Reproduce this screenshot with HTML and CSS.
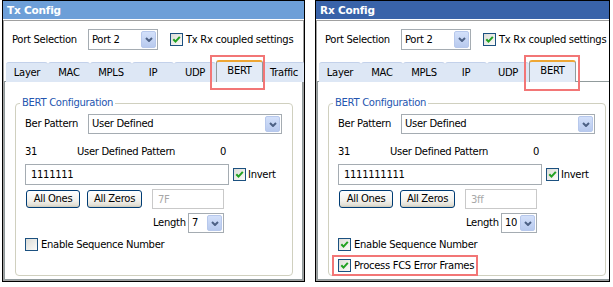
FILE: index.html
```html
<!DOCTYPE html>
<html lang="en">
<head>
  <meta charset="UTF-8" />
  <title>Tx / Rx Config</title>
  <link rel="stylesheet" href="styles.css">
</head>
<body>
  <div class="wrap">

    <!-- Tx panel -->
    <div class="panel panel-tx">
      <div class="title title-tx">Tx Config</div>
      <div class="frame">
        <div class="port-row">
          <span class="port-label">Port Selection</span>
          <div class="combo combo-port">
            <span class="combo-text">Port 2</span>
            <span class="drop"><svg width="8" height="5" viewBox="0 0 8 5"><path d="M1 1 L4 4 L7 1" fill="none" stroke="#4d6185" stroke-width="2"/></svg></span>
          </div>
          <label class="check-label coupled">
            <span class="check on"><svg width="11" height="11" viewBox="0 0 11 11"><path d="M2.3 5.2 L4.5 7.6 L8.8 2.8" fill="none" stroke="#21a121" stroke-width="2"/></svg></span>
            Tx Rx coupled settings
          </label>
        </div>

        <div class="tabs">
          <div class="tab">Layer</div>
          <div class="tab">MAC</div>
          <div class="tab">MPLS</div>
          <div class="tab">IP</div>
          <div class="tab">UDP</div>
          <div class="tab active mark-tx">BERT</div>
          <div class="tab">Traffic</div>
        </div>

        <div class="page">
          <fieldset class="group">
            <legend>BERT Configuration</legend>
            <div class="ber-row">
              <span class="ber-label">Ber Pattern</span>
              <div class="combo combo-ber">
                <span class="combo-text">User Defined</span>
                <span class="drop"><svg width="8" height="5" viewBox="0 0 8 5"><path d="M1 1 L4 4 L7 1" fill="none" stroke="#4d6185" stroke-width="2"/></svg></span>
              </div>
            </div>
            <div class="pattern-info">
              <span>31</span>
              <span>User Defined Pattern</span>
              <span>0</span>
            </div>
            <div class="pattern-row">
              <input class="text-input pattern-input" type="text" value="1111111">
              <label class="check-label invert">
                <span class="check on"><svg width="11" height="11" viewBox="0 0 11 11"><path d="M2.3 5.2 L4.5 7.6 L8.8 2.8" fill="none" stroke="#21a121" stroke-width="2"/></svg></span>
                Invert
              </label>
            </div>
            <div class="btn-row">
              <button class="btn btn-ones">All Ones</button>
              <button class="btn btn-zeros">All Zeros</button>
              <input class="text-input hex-input" type="text" value="7F" disabled>
            </div>
            <div class="length-row">
              <span class="length-label">Length</span>
              <div class="combo combo-len">
                <span class="combo-text">7</span>
                <span class="drop"><svg width="8" height="5" viewBox="0 0 8 5"><path d="M1 1 L4 4 L7 1" fill="none" stroke="#4d6185" stroke-width="2"/></svg></span>
              </div>
            </div>
            <label class="check-label seq-row">
              <span class="check"></span>
              Enable Sequence Number
            </label>
          </fieldset>
        </div>
      </div>
    </div>

    <!-- Rx panel -->
    <div class="panel panel-rx">
      <div class="title title-rx">Rx Config</div>
      <div class="frame">
        <div class="port-row">
          <span class="port-label">Port Selection</span>
          <div class="combo combo-port">
            <span class="combo-text">Port 2</span>
            <span class="drop"><svg width="8" height="5" viewBox="0 0 8 5"><path d="M1 1 L4 4 L7 1" fill="none" stroke="#4d6185" stroke-width="2"/></svg></span>
          </div>
          <label class="check-label coupled">
            <span class="check on"><svg width="11" height="11" viewBox="0 0 11 11"><path d="M2.3 5.2 L4.5 7.6 L8.8 2.8" fill="none" stroke="#21a121" stroke-width="2"/></svg></span>
            Tx Rx coupled settings
          </label>
        </div>

        <div class="tabs">
          <div class="tab">Layer</div>
          <div class="tab">MAC</div>
          <div class="tab">MPLS</div>
          <div class="tab">IP</div>
          <div class="tab">UDP</div>
          <div class="tab active mark-rx">BERT</div>
        </div>

        <div class="page">
          <fieldset class="group">
            <legend>BERT Configuration</legend>
            <div class="ber-row">
              <span class="ber-label">Ber Pattern</span>
              <div class="combo combo-ber">
                <span class="combo-text">User Defined</span>
                <span class="drop"><svg width="8" height="5" viewBox="0 0 8 5"><path d="M1 1 L4 4 L7 1" fill="none" stroke="#4d6185" stroke-width="2"/></svg></span>
              </div>
            </div>
            <div class="pattern-info">
              <span>31</span>
              <span>User Defined Pattern</span>
              <span>0</span>
            </div>
            <div class="pattern-row">
              <input class="text-input pattern-input" type="text" value="1111111111">
              <label class="check-label invert">
                <span class="check on"><svg width="11" height="11" viewBox="0 0 11 11"><path d="M2.3 5.2 L4.5 7.6 L8.8 2.8" fill="none" stroke="#21a121" stroke-width="2"/></svg></span>
                Invert
              </label>
            </div>
            <div class="btn-row">
              <button class="btn btn-ones">All Ones</button>
              <button class="btn btn-zeros">All Zeros</button>
              <input class="text-input hex-input" type="text" value="3ff" disabled>
            </div>
            <div class="length-row">
              <span class="length-label">Length</span>
              <div class="combo combo-len">
                <span class="combo-text">10</span>
                <span class="drop"><svg width="8" height="5" viewBox="0 0 8 5"><path d="M1 1 L4 4 L7 1" fill="none" stroke="#4d6185" stroke-width="2"/></svg></span>
              </div>
            </div>
            <label class="check-label seq-row">
              <span class="check on"><svg width="11" height="11" viewBox="0 0 11 11"><path d="M2.3 5.2 L4.5 7.6 L8.8 2.8" fill="none" stroke="#21a121" stroke-width="2"/></svg></span>
              Enable Sequence Number
            </label>
            <label class="check-label fcs-row">
              <span class="check on"><svg width="11" height="11" viewBox="0 0 11 11"><path d="M2.3 5.2 L4.5 7.6 L8.8 2.8" fill="none" stroke="#21a121" stroke-width="2"/></svg></span>
              Process FCS Error Frames
            </label>
          </fieldset>
        </div>
      </div>
    </div>

  </div>
</body>
</html>
```

FILE: styles.css
```css
body {
  margin: 0;
  font-family: "DejaVu Sans", sans-serif;
  font-size: 10px;
  letter-spacing: -0.3px;
  line-height: 12px;
  color: #000;
  background: #fff;
}
.wrap {
  display: flex;
  align-items: flex-start;
}
.panel {
  box-sizing: border-box;
  height: 282px;
  border: 1px solid #000;
  display: flex;
  flex-direction: column;
  overflow: hidden;
  background: #fff;
}
.panel-tx {
  width: 303px;
  margin-left: 2px;
}
.panel-rx {
  width: 295px;
  margin-left: 10px;
}
.title {
  flex-shrink: 0;
  height: 18px;
  line-height: 18px;
  padding-left: 4px;
  color: #fff;
  font-size: 10.5px;
  letter-spacing: -0.2px;
  font-weight: bold;
}
.title-tx {
  background: #6d9fd8;
}
.title-rx {
  background: #3963a9;
}
.frame {
  flex: 1;
  display: flex;
  flex-direction: column;
  margin-top: 1px;
  padding-top: 8px;
  border: 1px solid #a0a0a0;
  min-width: 299px;
}

/* top row */
.port-row {
  display: flex;
  align-items: center;
  height: 21px;
  padding-left: 8px;
  white-space: nowrap;
}
.port-label {
  width: 76px;
}
.combo {
  box-sizing: border-box;
  display: flex;
  align-items: stretch;
  border: 1px solid #a5acb2;
  background: #fff;
  padding-left: 3px;
}
.combo-text {
  flex: 1;
  display: flex;
  align-items: center;
}
.drop {
  box-sizing: border-box;
  width: 15px;
  margin: 1px;
  display: flex;
  align-items: center;
  justify-content: center;
  background: linear-gradient(#d3e0fa, #b8caee);
  border: 1px solid #b7c8ec;
  border-radius: 2px;
}
.combo-port {
  width: 70px;
  height: 21px;
}
.check-label {
  display: flex;
  align-items: center;
  gap: 3px;
  white-space: nowrap;
}
.coupled {
  margin-left: 12px;
}
.check {
  box-sizing: border-box;
  flex-shrink: 0;
  width: 13px;
  height: 13px;
  border: 1px solid #1c5180;
  background: linear-gradient(135deg, #dcdcd7, #fbfbf9);
  display: flex;
  align-items: center;
  justify-content: center;
}

/* tabs */
.tabs {
  display: flex;
  align-items: flex-end;
  height: 20px;
  margin-top: 12px;
  padding-left: 2px;
  box-shadow: inset 0 -1px #919b9c;
  white-space: nowrap;
}
.tab {
  box-sizing: border-box;
  flex-shrink: 0;
  width: 42px;
  height: 20px;
  line-height: 19px;
  text-align: center;
  background: #dde7f5;
  border-top: 1px solid #c3d1ea;
  border-radius: 3px 3px 0 0;
}
.tab.active {
  position: relative;
  width: 47px;
  height: 22px;
  line-height: 17px;
  background: #e3ebf7;
  border: 1px solid #919b9c;
  border-top: 2px solid #eea634;
  border-bottom: none;
}
.mark-tx::after,
.mark-rx::after,
.fcs-row::after {
  content: "";
  position: absolute;
  border: 2px solid #f27676;
}
.mark-tx::after {
  left: -7px;
  right: -3px;
  top: -7px;
  bottom: -8px;
}
.mark-rx::after {
  left: -6px;
  right: -5px;
  top: -7px;
  bottom: -9px;
}

/* tab page */
.page {
  flex: 1;
  border: 1px solid #919b9c;
  border-top: none;
}
.group {
  box-sizing: border-box;
  width: 278px;
  height: 179px;
  margin: 15px 0 0 10px;
  padding: 5px 9px 0;
  border: 1px solid #d0d0bf;
  border-radius: 4px;
  min-width: 0;
}
.group legend {
  color: #2456b0;
  padding: 0 2px;
  margin-left: -5px;
  line-height: 12px;
}
.ber-row {
  display: flex;
  align-items: center;
  height: 20px;
}
.ber-label {
  width: 63px;
}
.combo-ber {
  width: 194px;
  height: 20px;
}
.pattern-info {
  display: grid;
  grid-template-columns: 52px 143px auto;
  margin-top: 12px;
}
.pattern-row {
  display: flex;
  align-items: center;
  height: 21px;
  margin-top: 6px;
}
.text-input {
  box-sizing: border-box;
  font: inherit;
  letter-spacing: inherit;
  color: #000;
  background: #fff;
  border: 1px solid #a5acb2;
  padding: 0 0 0 5px;
  outline: none;
}
.pattern-input {
  width: 204px;
  height: 21px;
}
.invert {
  margin-left: 4px;
  gap: 2px;
}
.btn-row {
  display: flex;
  align-items: center;
  height: 20px;
  margin-top: 4px;
}
.btn {
  box-sizing: border-box;
  height: 18px;
  padding: 0;
  font: inherit;
  letter-spacing: inherit;
  color: #000;
  border: 1px solid #003c74;
  border-radius: 3px;
  background: linear-gradient(#ffffff, #f2f1ec 60%, #e3e0d6 88%, #cdc8b8);
}
.btn-ones {
  width: 54px;
  margin-left: 1px;
}
.btn-zeros {
  width: 55px;
  margin-left: 7px;
}
.hex-input {
  width: 72px;
  height: 20px;
  margin-left: 10px;
  color: #a8a8a8;
  border-color: #c9c9c9;
}
.length-row {
  display: flex;
  align-items: center;
  height: 20px;
  margin: 4px 0 0 128px;
}
.length-label {
  width: 35px;
}
.combo-len {
  width: 36px;
  height: 20px;
}
.seq-row {
  margin-top: 5px;
}
.fcs-row {
  position: relative;
  align-self: flex-start;
  width: fit-content;
  margin-top: 8px;
}
.fcs-row::after {
  left: -6px;
  right: -4px;
  top: -4px;
  bottom: -4px;
}
```
